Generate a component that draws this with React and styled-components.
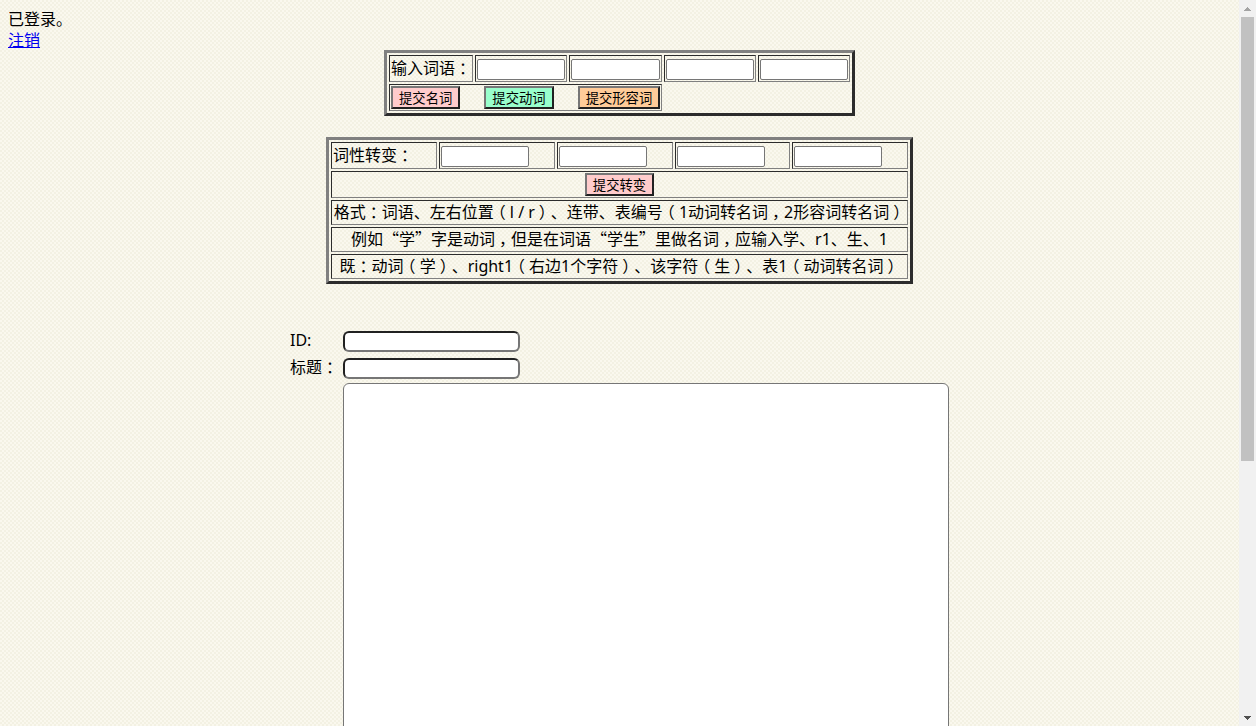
import React from "react";
import styled, { createGlobalStyle } from "styled-components";

const GlobalStyle = createGlobalStyle`
	* {
		box-sizing: border-box;
	}
	body {
		margin: 0;
		color: #000;
		font-family: "Noto Sans", "Noto Sans CJK SC", sans-serif;
		font-size: 16px;
		line-height: 21px;
		text-spacing-trim: space-all;
	}
`;

const Window = styled.div`
	display: flex;
	height: 100vh;
	overflow: hidden;
	background-color: #f7f5e9;
	background-image: conic-gradient(
		#f3f1e3 25%,
		#faf8ee 0 50%,
		#f3f1e3 0 75%,
		#faf8ee 0
	);
	background-size: 4px 4px;
`;

const Page = styled.main`
	flex: 1;
	min-width: 0;
	padding: 8px;
	overflow: hidden;
`;

const Status = styled.div`
	height: 21px;
	line-height: 23px;
`;

const LogoutLink = styled.a`
	color: #0000ee;
	text-decoration: underline;
`;

const WordForm = styled.form`
	display: flex;
	justify-content: center;
	margin-bottom: ${props => (props.$last ? "45px" : "21px")};
`;

const Table = styled.table`
	width: ${props => props.$width};
	table-layout: fixed;
	border: 3px solid;
	border-color: #808080 #2c2c2c #2c2c2c #808080;
	border-spacing: 2px;
`;

const LabelCol = styled.col`
	width: ${props => props.$width};
`;

const Cell = styled.td`
	height: ${props => (props.$tall ? "27px" : "25px")};
	padding: 1px;
	border: 1px solid;
	border-color: #2c2c2c #808080 #808080 #2c2c2c;
	text-align: ${props => (props.$center ? "center" : "left")};
	vertical-align: ${props => (props.$bottom ? "bottom" : "middle")};
	white-space: nowrap;
	line-height: 21px;
`;

const WordInput = styled.input`
	display: block;
	width: ${props => props.$width || "100%"};
	height: 21px;
	padding: 1px 2px;
	border: 1px solid #767676;
	border-radius: 2px;
	background: #fff;
`;

const ButtonRow = styled.div`
	display: flex;
	justify-content: ${props => (props.$center ? "center" : "flex-start")};
	gap: 24px;
`;

const SubmitButton = styled.button`
	height: 23px;
	padding: 0 6px;
	border: 2px solid;
	border-color: #767676 #212121 #212121 #767676;
	background: ${props => props.$color};
	color: #000;
	font-family: inherit;
`;

const ArticleForm = styled.form`
	display: grid;
	grid-template-columns: 53px minmax(0, 606px);
	grid-template-rows: 23px 23px auto;
	justify-content: center;
	row-gap: 4px;
`;

const FieldLabel = styled.label`
	align-self: center;
	white-space: nowrap;
`;

const FieldInput = styled.input`
	align-self: end;
	width: 177px;
	height: 21px;
	padding: 1px 2px;
	border: 2px solid;
	border-color: #212121 #767676 #767676 #212121;
	border-radius: 6px;
	background: #fff;
`;

const Content = styled.textarea`
	grid-column: 2;
	height: 700px;
	border: 1px solid #767676;
	border-radius: 6px;
	background: #fff;
	resize: none;
`;

const ScrollTrack = styled.div`
	display: flex;
	flex-direction: column;
	align-items: center;
	width: 17px;
	background: #f1f1f1;
`;

const ScrollThumb = styled.div`
	width: 13px;
	flex: 444 0 0;
	background: #c1c1c1;
`;

const ScrollRest = styled.div`
	flex: 248 0 0;
`;

const CenteredMark = styled.span`
	display: inline-block;
	width: 16px;
	font-family: "Noto Sans CJK SC", sans-serif;
	font-feature-settings: "halt" 1;
	line-height: 16px;
	text-align: center;
`;

const WideQuote = styled.span`
	font-family: "Noto Sans CJK SC", sans-serif;
	line-height: 16px;
`;

// colons, commas and brackets sit in the middle of their square, quotes take a full one
const Zh = ({ children }) =>
	children.split(/([：，（）“”])/).map((part, i) => {
		if (/^[：，（）]$/.test(part)) {
			return <CenteredMark key={i}>{part}</CenteredMark>;
		}
		if (part === "“" || part === "”") {
			return <WideQuote key={i}>{part}</WideQuote>;
		}
		return part;
	});

const wordButtons = [
	{ label: "提交名词", color: "#ffcccc" },
	{ label: "提交动词", color: "#99ffcc" },
	{ label: "提交形容词", color: "#ffcc99" }
];

const hints = [
	"格式：词语、左右位置（l / r）、连带、表编号（1动词转名词，2形容词转名词）",
	"例如“学”字是动词，但是在词语“学生”里做名词，应输入学、r1、生、1",
	"既：动词（学）、right1（右边1个字符）、该字符（生）、表1（动词转名词）"
];

const WordInputs = ({ name, title, width }) =>
	[1, 2, 3, 4].map(n => (
		<Cell key={n} $tall $bottom>
			<WordInput
				id={`${name}${n}`}
				type="text"
				aria-label={`${title}${n}`}
				$width={width}
			/>
		</Cell>
	));

const Arrow = ({ up }) => (
	<svg width="17" height="17" viewBox="0 0 17 17" aria-hidden="true">
		{up ? (
			<path d="M8 7h1v1h1v1h1v1h1v1H5v-1h1V9h1V8h1z" fill="#a3a3a3" />
		) : (
			<path d="M5 7h7v1h-1v1h-1v1H9v1H8v-1H7V9H6V8H5z" fill="#505050" />
		)}
	</svg>
);

const App = () => (
	<Window lang="zh-CN">
		<GlobalStyle />
		<Page>
			<Status>已登录。</Status>
			<Status>
				<LogoutLink href="#logout">注销</LogoutLink>
			</Status>

			<WordForm>
				<Table $width="471px">
					<colgroup>
						<LabelCol $width="84px" />
						<col span="4" />
					</colgroup>
					<tbody>
						<tr>
							<Cell $tall>
								<label htmlFor="word1">
									<Zh>输入词语：</Zh>
								</label>
							</Cell>
							<WordInputs name="word" title="词语" />
						</tr>
						<tr>
							<Cell $tall colSpan="3">
								<ButtonRow>
									{wordButtons.map(({ label, color }) => (
										<SubmitButton key={label} type="button" $color={color}>
											{label}
										</SubmitButton>
									))}
								</ButtonRow>
							</Cell>
						</tr>
					</tbody>
				</Table>
			</WordForm>

			<WordForm $last>
				<Table $width="587px">
					<colgroup>
						<LabelCol $width="106px" />
						<col span="4" />
					</colgroup>
					<tbody>
						<tr>
							<Cell $tall>
								<label htmlFor="change1">
									<Zh>词性转变：</Zh>
								</label>
							</Cell>
							<WordInputs name="change" title="转变" width="88px" />
						</tr>
						<tr>
							<Cell $tall colSpan="5">
								<ButtonRow $center>
									<SubmitButton type="button" $color="#ffcccc">
										提交转变
									</SubmitButton>
								</ButtonRow>
							</Cell>
						</tr>
						{hints.map(hint => (
							<tr key={hint}>
								<Cell $center colSpan="5">
									<Zh>{hint}</Zh>
								</Cell>
							</tr>
						))}
					</tbody>
				</Table>
			</WordForm>

			<ArticleForm>
				<FieldLabel htmlFor="article-id">ID:</FieldLabel>
				<FieldInput id="article-id" type="text" />
				<FieldLabel htmlFor="article-title">
					<Zh>标题：</Zh>
				</FieldLabel>
				<FieldInput id="article-title" type="text" />
				<Content aria-label="内容" />
			</ArticleForm>
		</Page>
		<ScrollTrack>
			<Arrow up />
			<ScrollThumb />
			<ScrollRest />
			<Arrow />
		</ScrollTrack>
	</Window>
);

export default App;
